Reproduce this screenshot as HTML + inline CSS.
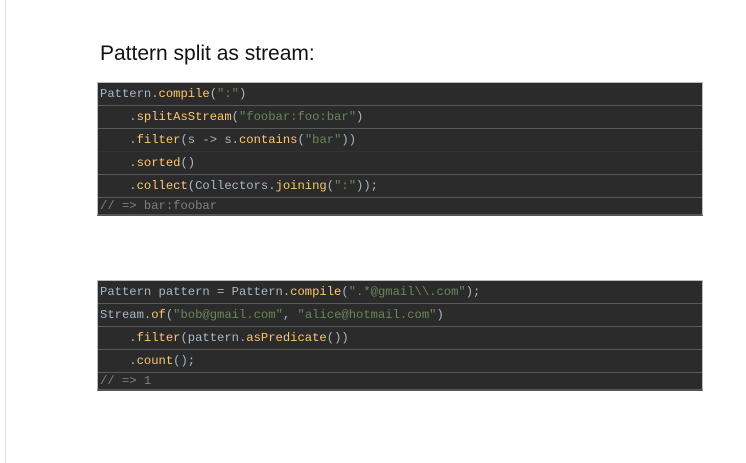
<!DOCTYPE html>
<html><head><style>
body{margin:0;width:746px;height:463px;background:#fff;position:relative;overflow:hidden}
.edge{position:absolute;left:5px;top:0;width:1px;height:463px;background:#e4e4e4}
h1{position:absolute;left:100px;top:42px;margin:0;font:21px "Liberation Sans",sans-serif;color:#111;font-weight:normal}
.code{position:absolute;left:97px;width:604px;background:#2b2b2b;border:1px solid #bbb;border-bottom:2px solid #555;font:12.2px "Liberation Mono",monospace;color:#a9b7c6}
.l{height:22px;line-height:22px;padding-left:2px;border-top:1px solid #5a5a5a;white-space:pre}
.l:first-child{border-top:none}
.m{color:#ffc66d}.s{color:#6a8759}.c{color:#808080}
</style></head><body>
<div class="edge"></div>
<h1>Pattern split as stream:</h1>
<div class="code" style="top:82px">
<div class="l">Pattern.<span class="m">compile</span>(<span class="s">":"</span>)</div>
<div class="l">    .<span class="m">splitAsStream</span>(<span class="s">"foobar:foo:bar"</span>)</div>
<div class="l">    .<span class="m">filter</span>(s -&gt; s.<span class="m">contains</span>(<span class="s">"bar"</span>))</div>
<div class="l" style="border-top-color:#333">    .<span class="m">sorted</span>()</div>
<div class="l">    .<span class="m">collect</span>(Collectors.<span class="m">joining</span>(<span class="s">":"</span>));</div>
<div class="l" style="height:16px;line-height:16px"><span class="c">// =&gt; bar:foobar</span></div>
</div>
<div class="code" style="top:280px">
<div class="l">Pattern pattern = Pattern.<span class="m">compile</span>(<span class="s">".*@gmail\\.com"</span>);</div>
<div class="l">Stream.<span class="m">of</span>(<span class="s">"bob@gmail.com"</span>, <span class="s">"alice@hotmail.com"</span>)</div>
<div class="l">    .<span class="m">filter</span>(pattern.<span class="m">asPredicate</span>())</div>
<div class="l">    .<span class="m">count</span>();</div>
<div class="l" style="height:16px;line-height:16px"><span class="c">// =&gt; 1</span></div>
</div>
</body></html>
